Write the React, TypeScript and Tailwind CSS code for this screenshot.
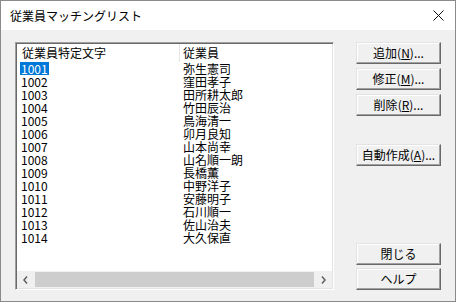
const rows = [
  ["1001", "弥生憲司"],
  ["1002", "窪田孝子"],
  ["1003", "田所耕太郎"],
  ["1004", "竹田辰治"],
  ["1005", "鳥海清一"],
  ["1006", "卯月良知"],
  ["1007", "山本尚幸"],
  ["1008", "山名順一朗"],
  ["1009", "長橋薫"],
  ["1010", "中野洋子"],
  ["1011", "安藤明子"],
  ["1012", "石川順一"],
  ["1013", "佐山治夫"],
  ["1014", "大久保直"],
];

function Btn({ label, mnemonic }: { label: string; mnemonic?: string }) {
  return (
    <button className="h-[22px] w-[85px] flex items-center justify-center bg-[#f0f0f0] border border-t-[#e3e3e3] border-l-[#e3e3e3] border-r-[#696969] border-b-[#696969] shadow-[inset_-1px_-1px_0_#a0a0a0,inset_1px_1px_0_#ffffff] text-[12px] leading-none text-black">
      {label}
      {mnemonic && (
        <>
          (<span className="underline underline-offset-1">{mnemonic}</span>)...
        </>
      )}
    </button>
  );
}

export default function App() {
  return (
    <div
      className="w-[456px] h-[302px] flex flex-col border border-[#8a8a8a] bg-[#f0f0f0] overflow-hidden"
      style={{ fontFamily: '"Noto Sans CJK JP", "Noto Sans", sans-serif' }}
    >
      <div className="h-[29px] shrink-0 bg-white flex items-center justify-between pl-[9px] pr-[11px]">
        <span className="text-[12px] text-black">従業員マッチングリスト</span>
        <svg width="11" height="11" viewBox="0 0 11 11">
          <path d="M0.5 0.5L10.5 10.5M10.5 0.5L0.5 10.5" stroke="#111" strokeWidth="1" />
        </svg>
      </div>

      <div className="flex-1 flex pt-[12px] pl-[14px] pb-[11px]">
        {/* list box */}
        <div className="w-[319px] h-[248px] flex flex-col bg-white border border-t-[#a0a0a0] border-l-[#a0a0a0] border-r-white border-b-white shadow-[inset_1px_1px_0_#696969,inset_-1px_-1px_0_#e3e3e3] p-[1px]">
          <div className="h-[18px] shrink-0 flex text-[12px] leading-[16px] text-black">
            <div className="w-[163px] pl-[5px] border-r border-[#e5e5e5] pt-[1px]">従業員特定文字</div>
            <div className="flex-1 pl-[3px] pt-[1px]">従業員</div>
          </div>
          <div className="flex-1 flex flex-col">
            {rows.map(([id, name], i) => (
              <div key={id} className="h-[13px] flex text-[12px] leading-[13px] text-black">
                <div className="w-[163px] pl-[3px]">
                  <span className={i === 0 ? "bg-[#0078d7] text-white px-[1px] inline-block h-[13px]" : "px-[1px]"}>
                    {id}
                  </span>
                </div>
                <div className="flex-1 pl-[3px]">{name}</div>
              </div>
            ))}
          </div>
          <div className="h-[17px] shrink-0 flex bg-[#f0f0f0]">
            <div className="w-[17px] flex items-center justify-center">
              <svg width="5" height="8" viewBox="0 0 5 8">
                <path d="M4 0.5L1 4L4 7.5" stroke="#606060" strokeWidth="1.5" fill="none" />
              </svg>
            </div>
            <div className="flex-1 py-[1px] px-[1px]">
              <div className="h-full bg-[#cdcdcd]" />
            </div>
            <div className="w-[17px] flex items-center justify-center">
              <svg width="5" height="8" viewBox="0 0 5 8">
                <path d="M1 0.5L4 4L1 7.5" stroke="#606060" strokeWidth="1.5" fill="none" />
              </svg>
            </div>
          </div>
        </div>

        {/* buttons */}
        <div className="ml-[22px] flex flex-col">
          <div className="flex flex-col gap-[4px]">
            <Btn label="追加" mnemonic="N" />
            <Btn label="修正" mnemonic="M" />
            <Btn label="削除" mnemonic="R" />
          </div>
          <div className="mt-[28px]">
            <Btn label="自動作成" mnemonic="A" />
          </div>
          <div className="mt-auto flex flex-col gap-[3px]">
            <Btn label="閉じる" />
            <Btn label="ヘルプ" />
          </div>
        </div>
      </div>
    </div>
  );
}
